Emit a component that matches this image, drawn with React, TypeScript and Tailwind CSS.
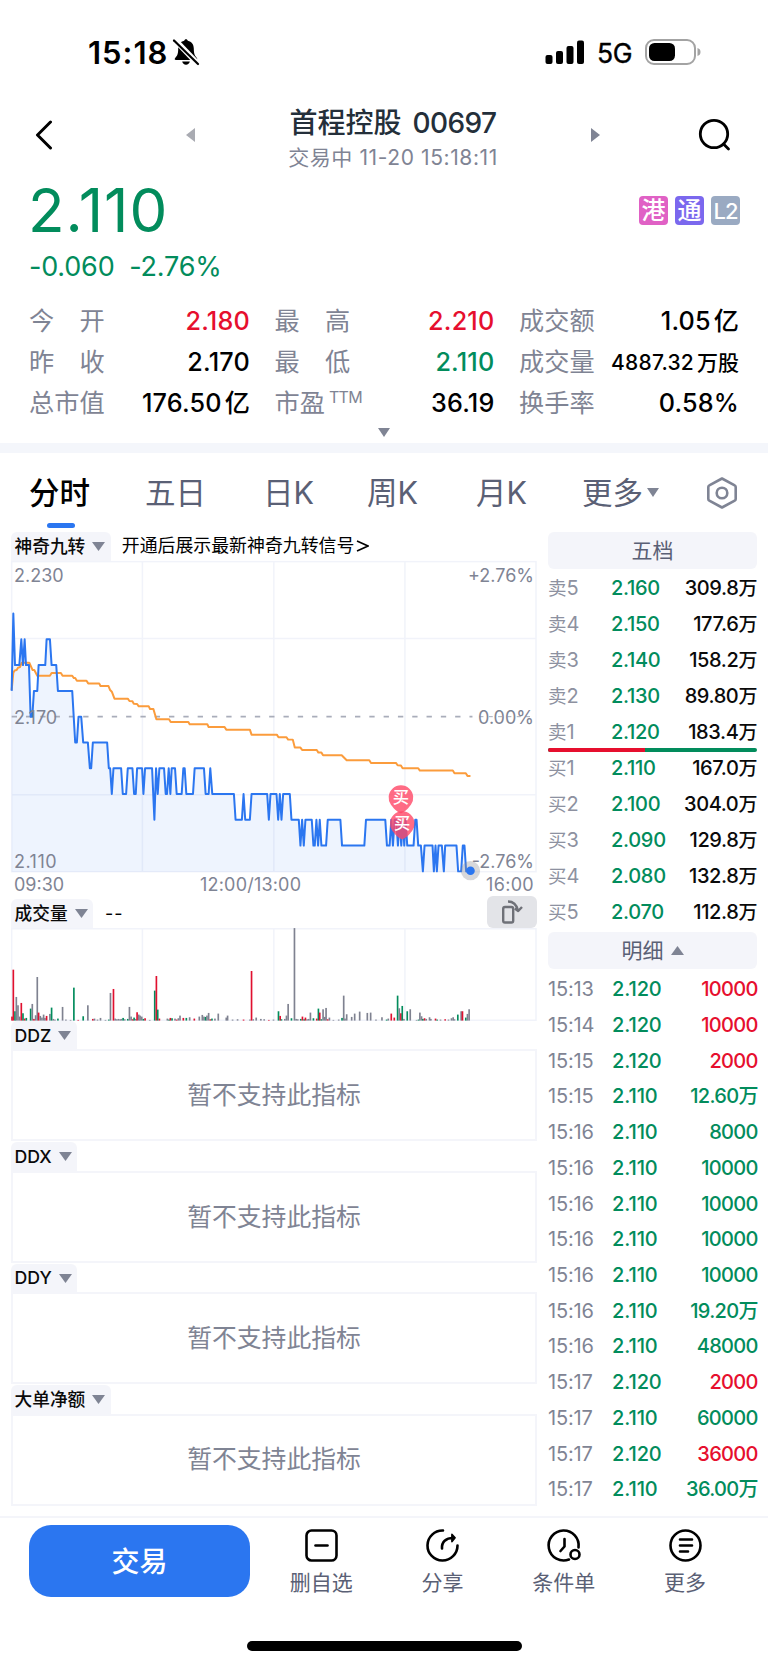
import clsx from 'clsx'

const GREEN = 'text-[#028c5c]'
const RED = 'text-[#e60f2e]'

// x runs in thirds of a pixel, the second value is the price in cents above 2.00
const PRICE: [number, number][] = [
  [35, 18], [40, 21], [45, 19], [58, 19], [64, 20], [69, 19], [74, 20], [78, 19], [87, 19], [92, 17], [97, 17],
  [102, 18], [112, 18], [116, 19], [136, 19], [140, 20], [150, 20], [155, 19], [169, 19], [174, 18], [217, 18],
  [226, 16], [231, 16], [236, 17], [244, 17], [250, 16], [264, 16], [270, 15], [274, 15], [279, 16], [322, 16],
  [327, 15], [331, 15], [336, 14], [341, 15], [364, 15], [369, 14], [379, 14], [384, 15], [398, 15], [403, 14],
  [408, 14], [412, 15], [427, 15], [431, 14], [436, 15], [457, 15], [464, 13], [469, 15], [474, 14], [479, 15],
  [493, 15], [498, 14], [502, 14], [507, 15], [512, 14], [516, 15], [526, 15], [531, 14], [546, 14], [551, 15],
  [555, 15], [560, 14], [580, 14], [585, 15], [613, 15], [618, 14], [627, 14], [632, 15], [638, 14], [703, 14],
  [708, 13], [727, 13], [732, 14], [737, 13], [751, 13], [756, 14], [803, 14], [808, 13], [813, 14], [831, 14],
  [836, 13], [841, 14], [846, 13], [851, 14], [871, 14], [876, 13], [898, 13], [903, 12], [908, 13], [913, 12],
  [918, 13], [937, 13], [942, 12], [946, 12], [951, 13], [956, 12], [961, 13], [966, 12], [980, 12], [985, 13],
  [1023, 13], [1028, 12], [1095, 12], [1100, 13], [1158, 13], [1163, 12], [1171, 12], [1176, 13], [1181, 12],
  [1186, 13], [1191, 13], [1196, 12], [1201, 13], [1206, 12], [1211, 13], [1215, 12], [1219, 13], [1224, 12],
  [1243, 12], [1248, 13], [1252, 13], [1257, 12], [1265, 12], [1271, 11], [1276, 12], [1300, 12], [1304, 11],
  [1309, 12], [1313, 11], [1318, 12], [1328, 12], [1334, 11], [1338, 12], [1372, 12], [1377, 11], [1386, 11],
  [1391, 12], [1396, 12], [1401, 11], [1414, 11],
]

const AVERAGE =
  '35,480 40,428 44,421 50,420 54,413 60,411 65,398 88,398 98,420 103,420 112,437 150,437 155,429 183,429 188,437 217,437 222,444 226,444 231,452 260,452 265,460 298,460 302,468 326,468 331,480 336,485 344,506 384,506 389,513 398,514 402,521 412,522 417,529 447,529 451,537 461,537 470,568 508,568 513,576 566,576 570,583 623,583 627,591 675,591 680,599 751,599 756,614 832,614 837,622 861,622 866,629 880,629 886,653 903,653 908,660 952,660 957,668 966,668 971,676 1027,676 1042,691 1110,691 1115,699 1190,699 1195,706 1205,707 1210,715 1257,715 1262,722 1361,722 1366,730 1400,730 1405,738 1414,738'

const priceY = (cents: number) => 1025 - (cents - 11) * 77.5
const PRICE_POINTS = PRICE.map(([x, c]) => `${x},${priceY(c)}`).join(' ')

type Tone = 'r' | 'g' | 'n'
const BAR_COLOR: Record<Tone, string> = { r: '#e0102f', g: '#028c5c', n: '#7f8290' }

// x, height, tone
const VOLUME: [number, number, Tone][] = [
  [36, 12, 'r'], [40, 153, 'r'], [45, 28, 'g'], [49, 71, 'n'], [54, 46, 'n'], [59, 12, 'n'], [64, 53, 'r'],
  [69, 22, 'g'], [74, 6, 'r'], [79, 8, 'g'], [92, 36, 'g'], [97, 50, 'n'], [102, 5, 'r'], [107, 16, 'n'],
  [112, 131, 'n'], [116, 24, 'r'], [121, 14, 'n'], [126, 9, 'n'], [131, 18, 'n'], [135, 8, 'n'], [140, 14, 'r'],
  [150, 20, 'n'], [155, 39, 'g'], [160, 5, 'n'], [165, 3, 'n'], [174, 6, 'g'], [188, 41, 'n'], [198, 3, 'n'],
  [212, 2, 'n'], [222, 99, 'g'], [235, 2, 'r'], [250, 13, 'g'], [264, 46, 'n'], [279, 5, 'r'], [284, 6, 'n'],
  [293, 3, 'n'], [302, 8, 'n'], [317, 2, 'n'], [327, 3, 'g'], [332, 83, 'n'], [341, 95, 'r'], [346, 6, 'n'],
  [351, 4, 'n'], [356, 5, 'n'], [361, 4, 'n'], [365, 5, 'n'], [370, 8, 'g'], [375, 4, 'n'], [384, 5, 'g'],
  [389, 41, 'n'], [394, 12, 'n'], [399, 4, 'r'], [403, 9, 'g'], [408, 5, 'n'], [412, 25, 'r'], [417, 18, 'n'],
  [421, 15, 'n'], [426, 12, 'n'], [431, 5, 'g'], [436, 7, 'r'], [450, 2, 'n'], [465, 90, 'g'], [470, 134, 'r'],
  [474, 33, 'g'], [479, 6, 'r'], [503, 6, 'n'], [508, 3, 'g'], [512, 8, 'r'], [517, 7, 'g'], [526, 6, 'n'],
  [531, 3, 'r'], [536, 7, 'n'], [541, 15, 'n'], [551, 8, 'r'], [560, 8, 'g'], [570, 10, 'n'], [584, 6, 'r'],
  [599, 12, 'n'], [608, 17, 'n'], [613, 12, 'n'], [618, 11, 'g'], [622, 15, 'n'], [627, 23, 'n'], [632, 4, 'r'],
  [637, 6, 'g'], [646, 6, 'n'], [656, 21, 'n'], [680, 9, 'n'], [684, 15, 'n'], [699, 3, 'n'], [714, 4, 'n'],
  [732, 3, 'r'], [751, 3, 'n'], [756, 149, 'r'], [761, 4, 'n'], [770, 9, 'n'], [784, 5, 'n'], [794, 4, 'n'],
  [808, 2, 'r'], [822, 3, 'n'], [837, 28, 'g'], [842, 14, 'r'], [846, 4, 'g'], [856, 5, 'n'], [861, 15, 'n'],
  [866, 50, 'n'], [876, 7, 'g'], [885, 278, 'n'], [890, 5, 'n'], [895, 4, 'n'], [904, 5, 'g'], [909, 12, 'r'],
  [914, 4, 'g'], [918, 9, 'r'], [923, 4, 'n'], [928, 5, 'n'], [933, 24, 'n'], [942, 7, 'g'], [952, 6, 'r'],
  [957, 36, 'g'], [961, 24, 'r'], [966, 4, 'g'], [971, 34, 'n'], [976, 11, 'n'], [980, 38, 'n'], [985, 4, 'r'],
  [990, 9, 'n'], [1002, 2, 'n'], [1018, 3, 'n'], [1028, 8, 'g'], [1033, 75, 'n'], [1037, 6, 'n'], [1042, 19, 'n'],
  [1057, 11, 'n'], [1066, 21, 'n'], [1081, 27, 'n'], [1104, 23, 'n'], [1114, 24, 'n'], [1130, 3, 'n'],
  [1148, 10, 'n'], [1162, 3, 'g'], [1167, 6, 'n'], [1176, 21, 'r'], [1185, 9, 'r'], [1195, 75, 'g'],
  [1200, 37, 'n'], [1205, 22, 'r'], [1209, 44, 'g'], [1214, 5, 'n'], [1224, 28, 'g'], [1233, 34, 'n'],
  [1252, 2, 'n'], [1258, 3, 'g'], [1262, 24, 'n'], [1267, 13, 'n'], [1271, 5, 'g'], [1276, 7, 'r'], [1281, 5, 'n'],
  [1291, 10, 'n'], [1295, 5, 'n'], [1309, 6, 'r'], [1314, 3, 'g'], [1324, 3, 'n'], [1338, 4, 'r'], [1348, 3, 'n'],
  [1357, 7, 'n'], [1362, 10, 'n'], [1366, 4, 'n'], [1376, 18, 'g'], [1386, 28, 'n'], [1390, 28, 'r'],
  [1400, 9, 'g'], [1405, 20, 'n'], [1410, 34, 'n'],
]

const STATS = [
  ['今　开', '2.180', '', RED], ['最　高', '2.210', '', RED], ['成交额', '1.05', '亿', ''],
  ['昨　收', '2.170', '', ''], ['最　低', '2.110', '', GREEN], ['成交量', '4887.32', '万股', ''],
  ['总市值', '176.50', '亿', ''], ['市盈', '36.19', '', ''], ['换手率', '0.58%', '', ''],
]

const SELLS = [
  ['卖5', '2.160', '309.8'], ['卖4', '2.150', '177.6'], ['卖3', '2.140', '158.2'],
  ['卖2', '2.130', '89.80'], ['卖1', '2.120', '183.4'],
]
const BUYS = [
  ['买1', '2.110', '167.0'], ['买2', '2.100', '304.0'], ['买3', '2.090', '129.8'],
  ['买4', '2.080', '132.8'], ['买5', '2.070', '112.8'],
]

const TRADES = [
  ['15:13', '2.120', '10000', RED], ['15:14', '2.120', '10000', RED], ['15:15', '2.120', '2000', RED],
  ['15:15', '2.110', '12.60万', GREEN], ['15:16', '2.110', '8000', GREEN], ['15:16', '2.110', '10000', GREEN],
  ['15:16', '2.110', '10000', GREEN], ['15:16', '2.110', '10000', GREEN], ['15:16', '2.110', '10000', GREEN],
  ['15:16', '2.110', '19.20万', GREEN], ['15:16', '2.110', '48000', GREEN], ['15:17', '2.120', '2000', RED],
  ['15:17', '2.110', '60000', GREEN], ['15:17', '2.120', '36000', RED], ['15:17', '2.110', '36.00万', GREEN],
]

function Triangle({ className, points = '0,0 12,0 6,9' }: { className?: string; points?: string }) {
  return (
    <svg viewBox="0 0 12 9" preserveAspectRatio="none" className={clsx('shrink-0', className)}>
      <polygon points={points} fill="#7f8494" />
    </svg>
  )
}

function StatusBar() {
  return (
    <div className="flex h-[104px] items-center justify-between pl-[88px] pr-[67px]">
      <div className="flex items-center gap-[4px]">
        <span className="text-[31px] font-semibold leading-none tracking-[1px]">15:18</span>
        <svg width="28" height="28" viewBox="0 0 28 28">
          <path d="M14 1.200c.9 0 1.600.7 1.800 1.500 3.900.8 6 3.800 6 7.900 0 5.600 1 7.200 3 9.400.9 1 .5 2-.8 2H4c-1.300 0-1.700-1-.8-2 2-2.200 3-3.800 3-9.400 0-4.100 2.100-7.100 6-7.900.2-.8.9-1.500 1.800-1.500z" />
          <path d="M10.200 23.600h7.600c-.3 1.900-1.900 3.200-3.800 3.200s-3.500-1.300-3.800-3.200z" />
          <path d="M3 2l23 24" stroke="#fff" strokeWidth="5.500" />
          <path d="M2 2.500l24 23.500" stroke="#000" strokeWidth="2.200" strokeLinecap="round" />
        </svg>
      </div>
      <div className="flex items-center">
        <svg width="40" height="25" viewBox="0 0 40 25">
          <rect x="0.500" y="15" width="7" height="9" rx="2" />
          <rect x="11" y="11" width="7" height="13" rx="2" />
          <rect x="21.500" y="6" width="7" height="18" rx="2" />
          <rect x="32" y="0.500" width="7" height="23.500" rx="2" />
        </svg>
        <span className="ml-[12px] mt-[3px] text-[26.500px] leading-none tracking-[-0.500px] [-webkit-text-stroke:0.4px_black]">5G</span>
        <svg width="56" height="26" viewBox="0 0 56 26" className="ml-[13px]">
          <rect x="1" y="1" width="49" height="24" rx="8" fill="none" stroke="#a3a3a3" strokeWidth="2" />
          <rect x="4" y="4" width="26" height="18" rx="5.500" />
          <path d="M52.500 9c2.300.7 3 2.100 3 4s-.7 3.300-3 4z" fill="#a3a3a3" />
        </svg>
      </div>
    </div>
  )
}

function NavBar() {
  return (
    <div className="flex h-[70px] items-start pl-[34px]">
      <svg width="20" height="30" viewBox="0 0 20 30" className="mt-4" fill="none" stroke="#000" strokeWidth="3" strokeLinecap="round" strokeLinejoin="round">
        <path d="M16.500 2L3.500 15l13 13" />
      </svg>
      <svg width="9" height="14" viewBox="0 0 9 14" className="ml-[132px] mt-[24px]">
        <polygon points="9,0 0,7 9,14" fill="#a9abb2" />
      </svg>
      <div className="flex w-[396px] flex-col items-center">
        <span className="flex gap-[11px] whitespace-nowrap text-[28px] font-medium leading-[39px] text-[#242f3a]">
          首程控股
          <span className="tracking-[-0.600px]">00697</span>
        </span>
        <span className="whitespace-nowrap text-[21px] leading-[30px] tracking-[0.600px] text-[#7f8494]">交易中 11-20 15:18:11</span>
      </div>
      <svg width="9" height="14" viewBox="0 0 9 14" className="mt-[24px]">
        <polygon points="0,0 9,7 0,14" fill="#7f8494" />
      </svg>
      <svg width="34" height="34" viewBox="0 0 34 34" className="ml-[98px] mt-[14px]" fill="none" stroke="#000" strokeWidth="2.800" strokeLinecap="round">
        <circle cx="16" cy="16" r="13.700" />
        <path d="M25.500 26l5 5" />
      </svg>
    </div>
  )
}

function Quote() {
  return (
    <div className="flex h-[119px] justify-between pl-[29px] pr-[28px]">
      <div className={clsx('flex flex-col', GREEN)}>
        <span className="-ml-px text-[60px] leading-[73px] tracking-[1px]">2.110</span>
        <span className="mt-[5px] whitespace-pre text-[27px] leading-[30px] tracking-[-0.200px]">-0.060  -2.76%</span>
      </div>
      <div className="mt-[22px] flex gap-[7px] text-[24px] font-medium leading-[28px] text-white">
        <span className="flex h-[29px] w-[29px] items-center justify-center rounded bg-[#e061c5]">港</span>
        <span className="flex h-[29px] w-[29px] items-center justify-center rounded bg-[#7b68ee]">通</span>
        <span className="flex h-[29px] w-[29px] items-center justify-center rounded bg-[#9aaac2] text-[22px] tracking-[-1px]">L2</span>
      </div>
    </div>
  )
}

function Stats() {
  return (
    <div className="mt-[8px] grid grid-cols-[221px_220px_220px] gap-x-[24.500px] pl-[29px] text-[25.200px]">
      {STATS.map(([label, value, unit, tone]) => (
        <div key={label} className="flex h-[41.300px] items-center justify-between whitespace-nowrap">
          <span className="flex text-[#7f8494]">
            {label}
            {label === '市盈' && <sup className="top-0 ml-1 mt-[4px] text-[16px] leading-none tracking-[-0.700px]">TTM</sup>}
          </span>
          <span className={clsx('flex items-baseline gap-[3px] font-medium', unit === '万股' && 'text-[21px]', tone)}>
            <span className="tracking-[0.200px]">{value}</span>
            {unit && <span>{unit}</span>}
          </span>
        </div>
      ))}
    </div>
  )
}

function Tabs() {
  return (
    <div className="flex h-[79px] items-start pl-[29px] pt-[20px] text-[30.500px] leading-[40px] text-[#5a6075]">
      <div className="flex w-[116px] flex-col">
        <span className="font-medium text-black">分时</span>
        <span className="ml-[18px] mt-[10px] h-[5px] w-[28px] rounded-full bg-[#2b76f0]" />
      </div>
      <span className="w-[118px]">五日</span>
      <span className="w-[104px]">日K</span>
      <span className="w-[109px]">周K</span>
      <span className="w-[106px]">月K</span>
      <span className="flex w-[125px] items-center gap-[4px]">
        更多
        <Triangle className="h-[9px] w-[12px]" />
      </span>
      <svg width="30" height="32" viewBox="0 0 30 32" className="mt-[4px]" fill="none" stroke="#7f8494" strokeWidth="2.600" strokeLinejoin="round">
        <path d="M15 1.500l12.700 6.800q1 .5 1 1.700v12q0 1.200-1 1.700L15 30.500 2.300 23.700q-1-.5-1-1.700V10q0-1.200 1-1.700z" />
        <circle cx="15" cy="16" r="5.300" />
      </svg>
    </div>
  )
}

function Chip({ children }: { children: string }) {
  return (
    <span className="flex h-[29px] items-center gap-[7px] rounded-t-md bg-[#f4f5fa] pl-[3.500px] pr-[5.500px] text-[17.700px] font-medium leading-none text-[#0a0a0a]">
      {children}
      <Triangle className="h-[9px] w-[13px]" />
    </span>
  )
}

function BuyPin({ x, y }: { x: number; y: number }) {
  return (
    <g transform={`translate(${x} ${y})`}>
      <path d="M-30 26a37 37 0 1 1 60 0C18 42 10 48 0 52c-10-4-18-10-30-26z" fill="#ff4766" fillOpacity="0.800" />
      <text y="20" textAnchor="middle" fontSize="49" fontWeight="500" fill="#fff">买</text>
    </g>
  )
}

function PriceChart() {
  return (
    <div className="relative h-[312px]">
      <svg viewBox="33 93 1581 936" className="h-full w-full overflow-visible">
        <g stroke="#f1f3fa" strokeWidth="4.500" fill="none">
          <rect x="35" y="94" width="1576" height="932" />
          <path d="M35 325H1611M35 795H1611M428 94V1026M823 94V1026M1217 94V1026" />
        </g>
        <polygon points={`35,1026 ${PRICE_POINTS} 1414,1026`} fill="#2b76f0" fillOpacity="0.080" />
        <path d="M35 560H1420" stroke="#a9adba" strokeWidth="5" strokeDasharray="16 27" />
        <path d="M1441 560H1600" stroke="#a9adba" strokeWidth="3" strokeDasharray="12 16" />
        <polyline points={AVERAGE} fill="none" stroke="#fb9c3c" strokeWidth="6" strokeLinejoin="round" />
        <polyline points={PRICE_POINTS} fill="none" stroke="#2b76f0" strokeWidth="6" strokeLinejoin="round" />
        <BuyPin x={1205} y={799} />
        <BuyPin x={1209} y={877} />
      </svg>
      <div className="absolute inset-x-0 -bottom-[2px] top-[2px] flex flex-col justify-between px-[3px] text-[18px] leading-[26px] text-[#7f8494]">
        <div className="flex justify-between"><span>2.230</span><span>+2.76%</span></div>
        <div className="-mt-[2px] flex justify-between"><span>2.170</span><span>0.00%</span></div>
        <div className="flex justify-between"><span className="tracking-[0.500px]">2.110</span><span>-2.76%</span></div>
      </div>
      <svg viewBox="33 93 1581 936" className="absolute inset-0 h-full w-full overflow-visible">
        <circle cx="1414" cy="1023" r="29" fill="#8b8d94" fillOpacity="0.350" />
        <circle cx="1414" cy="1023" r="13" fill="#2b76f0" />
      </svg>
    </div>
  )
}

function VolumeChart() {
  return (
    <svg viewBox="33 115 1581 279" className="h-[93px] w-full">
      <path d="M35 117H1611V392H35zM428 117V392M823 117V392M1217 117V392" stroke="#f1f3fa" strokeWidth="4.500" fill="none" />
      {VOLUME.map(([x, h, tone]) => (
        <rect key={x} x={x - 2.5} y={393 - h} width="5" height={h} fill={BAR_COLOR[tone]} />
      ))}
    </svg>
  )
}

function Indicator({ name }: { name: string }) {
  return (
    <div className="h-[121.400px]">
      <div className="flex h-[28.500px]"><Chip>{name}</Chip></div>
      <div className="flex h-[92px] items-center justify-center border-2 border-[#f4f5fa] pt-px text-[24.800px] text-[#7f8494]">
        暂不支持此指标
      </div>
    </div>
  )
}

function Charts() {
  return (
    <div className="w-[526px] shrink-0">
      <div className="flex h-[29px] items-center gap-[11px]">
        <Chip>神奇九转</Chip>
        <span className="flex items-center gap-[2px] whitespace-nowrap text-[17.900px] text-black">
          开通后展示最新神奇九转信号
          <svg width="13" height="12" viewBox="0 0 13 12" fill="none" stroke="#000" strokeWidth="1.600">
            <path d="M1 1l11 5-11 5" />
          </svg>
        </span>
      </div>
      <PriceChart />
      <div className="flex h-[26px] px-[3px] text-[18px] leading-[23px] text-[#7f8494]">
        <span className="w-[186px]">09:30</span>
        <span className="tracking-[0.200px]">12:00/13:00</span>
        <span className="ml-auto tracking-[0.300px]">16:00</span>
      </div>
      <div className="flex h-[29px] items-center">
        <Chip>成交量</Chip>
        <span className="ml-[12px] text-[18px] tracking-[1px] text-black">--</span>
        <span className="-mt-[3px] ml-auto flex h-[32px] w-[50px] items-center justify-center rounded-md bg-[#e3e4e8]">
          <svg width="22" height="24" viewBox="0 0 22 24" fill="none" stroke="#6f7178" strokeWidth="2.400" strokeLinejoin="round">
            <rect x="2.200" y="7" width="10" height="15.500" rx="1.800" />
            <path d="M7 1.500c5 0 8.500 3 10 9" />
            <path d="M13.800 8.500l3.400 2.500 3.800-4" />
          </svg>
        </span>
      </div>
      <VolumeChart />
      {['DDZ', 'DDX', 'DDY', '大单净额'].map((name) => <Indicator key={name} name={name} />)}
    </div>
  )
}

function BookRow({ row }: { row: string[] }) {
  return (
    <div className="grid h-[36.050px] grid-cols-[63px_60px_1fr] items-center text-[20px]">
      <span className="whitespace-nowrap text-[#8d91a0]"><span className="text-[18.500px]">{row[0][0]}</span>{row[0][1]}</span>
      <span className={clsx('font-[450] tracking-[-0.300px]', GREEN)}>{row[1]}</span>
      <span className="text-right font-[450] tracking-[-0.400px] text-[#0a0a0a]">{row[2]}<span className="text-[19px]">万</span></span>
    </div>
  )
}

function OrderBook() {
  return (
    <div className="w-[209px]">
      <div className="flex h-[37px] items-center justify-center rounded-md bg-[#f4f5fa] text-[21px] text-[#5a6075]">五档</div>
      <div className="relative h-[363px] pt-px">
        {SELLS.map((row) => <BookRow key={row[0]} row={row} />)}
        {BUYS.map((row) => <BookRow key={row[0]} row={row} />)}
        <div className="absolute left-0 top-[179px] flex h-[4px] w-full overflow-hidden rounded-full bg-[#028c5c]">
          <span className="w-[97px] bg-[#e60f2e]" />
        </div>
      </div>
      <div className="flex h-[37px] items-center justify-center gap-[7px] rounded-md bg-[#f4f5fa] text-[21px] text-[#5a6075]">
        明细
        <Triangle className="h-[9px] w-[13px]" points="0,9 12,9 6,0" />
      </div>
      <div className="pt-[2.500px]">
        {TRADES.map(([time, price, volume, tone], i) => (
          <div key={i} className="grid h-[35.720px] grid-cols-[64px_60px_1fr] items-center text-[20px]">
            <span className="tracking-[-0.200px] text-[#7f8494]">{time}</span>
            <span className={clsx('font-[450] tracking-[-0.100px]', GREEN)}>{price}</span>
            <span className={clsx('-mr-[0.700px] text-right font-[450] tracking-[-0.700px]', tone)}>{volume}</span>
          </div>
        ))}
      </div>
    </div>
  )
}

const ACTIONS = [
  {
    label: '删自选',
    icon: (
      <>
        <rect x="1.500" y="1.500" width="30" height="30" rx="5" />
        <path d="M10.500 16.500h12" />
      </>
    ),
  },
  {
    label: '分享',
    icon: (
      <>
        <path d="M17 1.500a15 15 0 1 0 14.500 15" />
        <path d="M16 19.500c-.5-6.500 4-10.500 11-10.500" />
        <path d="M26 5.500l3 3.300-3 3.700z" fill="#000" strokeWidth="1.800" />
      </>
    ),
  },
  {
    label: '条件单',
    icon: (
      <>
        <path d="M22 30.500A15 15 0 1 1 31.500 18.500" />
        <path d="M17.500 10v7.500l-4 4.500" />
        <circle cx="28" cy="25.500" r="4.500" />
      </>
    ),
  },
  {
    label: '更多',
    icon: (
      <>
        <circle cx="16.500" cy="16.500" r="15" />
        <path d="M11 10.500h12M11 16.500h12M11 22.500h8" />
      </>
    ),
  },
]

function BottomBar() {
  return (
    <div className="flex h-[149px] flex-col border-t-2 border-[#f4f5fa]">
      <div className="flex pl-[29px] pt-[7px]">
        <button className="h-[72px] w-[221px] rounded-[22px] bg-[#2b76f0] pt-[2px] text-[28px] font-medium text-white">交易</button>
        <div className="ml-[10.500px] flex pt-[4px]">
          {ACTIONS.map(({ label, icon }) => (
            <div key={label} className="flex w-[121.300px] flex-col items-center">
              <svg width="33" height="33" viewBox="0 0 33 33" fill="none" stroke="#000" strokeWidth="2.600" strokeLinecap="round" strokeLinejoin="round" className="overflow-visible">
                {icon}
              </svg>
              <span className="mt-[6px] text-[21px] leading-[30px] text-[#5a6075]">{label}</span>
            </div>
          ))}
        </div>
      </div>
      <div className="mx-auto mb-[14px] mt-auto h-[10px] w-[275px] rounded-full bg-black" />
    </div>
  )
}

export default function App() {
  return (
    <div className="flex h-[1665px] w-[768px] flex-col overflow-hidden bg-white font-['Inter','Noto_Sans_CJK_SC',sans-serif] text-black">
      <StatusBar />
      <NavBar />
      <Quote />
      <Stats />
      <div className="flex h-[18px] justify-center pt-[3px]">
        <Triangle className="h-[9px] w-[12px]" />
      </div>
      <div className="h-[10px] bg-[#f4f6fb]" />
      <Tabs />
      <div className="flex flex-1 gap-[11px] pl-[11px]">
        <Charts />
        <OrderBook />
      </div>
      <BottomBar />
    </div>
  )
}
